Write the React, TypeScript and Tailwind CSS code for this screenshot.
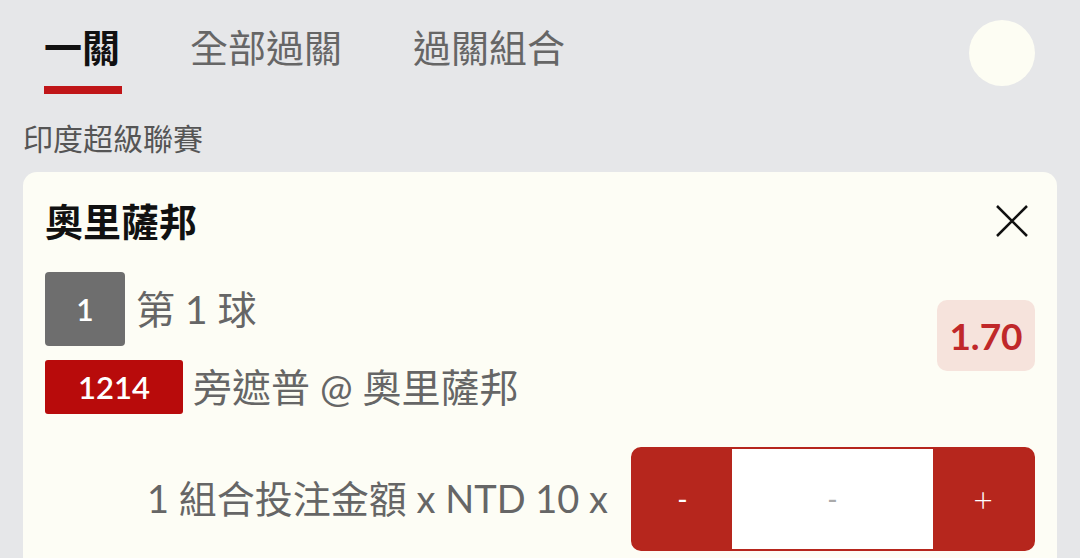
export default function App() {
  return (
    <div className="w-[1080px] h-[558px] overflow-hidden bg-[#e6e7e9] font-['Lato','Noto_Sans_CJK_TC',sans-serif]">
      {/* Tabs */}
      <div className="flex items-start pl-[44px] pr-[45px] pt-[20px]">
        <div className="flex flex-col mt-[7px]">
          <span className="text-[38px] leading-[40px] font-bold text-[#111]">一關</span>
          <div className="h-[8px] w-[78px] mt-[19px] bg-[#c01518]" />
        </div>
        <span className="ml-[68px] mt-[7px] text-[38px] leading-[40px] text-[#666]">全部過關</span>
        <span className="ml-[71px] mt-[7px] text-[38px] leading-[40px] text-[#666]">過關組合</span>
        <div className="ml-auto w-[66px] h-[66px] rounded-full bg-[#fdfdf3]" />
      </div>

      <div className="pl-[23px] mt-[29px] text-[30px] leading-[30px] text-[#555]">印度超級聯賽</div>

      {/* Bet card */}
      <div className="mx-[23px] mt-[19px] rounded-[14px] bg-[#fdfdf5] px-[22px] pt-[31px] pb-[20px]">
        <div className="flex items-center justify-between">
          <span className="text-[38px] leading-[36px] font-bold text-[#111]">奧里薩邦</span>
          <svg width="34" height="34" viewBox="0 0 34 34" className="mr-[6px]">
            <path d="M2 2 L32 32 M32 2 L2 32" stroke="#111" strokeWidth="2.5" fill="none" />
          </svg>
        </div>

        <div className="flex items-start justify-between mt-[33px]">
          <div className="flex flex-col">
            <div className="flex items-center">
              <div className="w-[80px] h-[74px] rounded-[4px] bg-[#6e6e6e] flex items-center justify-center text-white text-[30px] font-semibold">1</div>
              <span className="ml-[11px] text-[39px] text-[#666]">第 1 球</span>
            </div>
            <div className="flex items-center mt-[12px]">
              <div className="w-[138px] h-[54px] rounded-[3px] bg-[#b80b0b] flex items-center justify-center text-white text-[31px] font-semibold">1214</div>
              <span className="ml-[10px] text-[39px] text-[#666]">旁遮普 @ 奧里薩邦</span>
            </div>
          </div>
          <div className="mt-[28px] w-[98px] h-[71px] rounded-[10px] bg-[#f6e3dc] flex items-center justify-center text-[37px] font-bold text-[#c0282a]">
            1.70
          </div>
        </div>

        <div className="flex items-center justify-end gap-[23px] mt-[30px]">
          <span className="text-[38px] text-[#666]">1 組合投注金額 x NTD 10 x</span>
          <div className="w-[404px] h-[104px] rounded-[10px] bg-[#b6261d] flex border-2 border-[#b6261d] overflow-hidden">
            <div className="w-[99px] flex items-center justify-center text-white text-[28px]">-</div>
            <div className="flex-1 bg-white flex items-center justify-center text-[#aaa] text-[28px]">-</div>
            <div className="w-[100px] flex items-center justify-center text-white text-[34px] font-light">+</div>
          </div>
        </div>
      </div>
    </div>
  );
}
